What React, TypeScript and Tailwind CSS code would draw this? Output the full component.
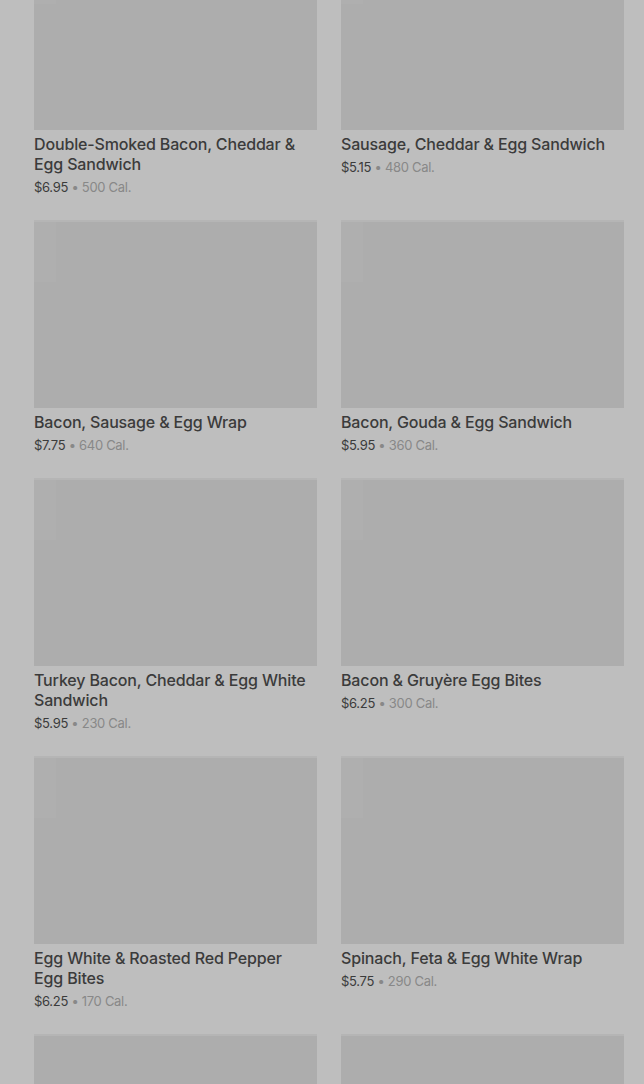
const items = [
  { name: "Double-Smoked Bacon, Cheddar & Egg Sandwich", price: "$6.95", cal: "500" },
  { name: "Sausage, Cheddar & Egg Sandwich", price: "$5.15", cal: "480" },
  { name: "Bacon, Sausage & Egg Wrap", price: "$7.75", cal: "640" },
  { name: "Bacon, Gouda & Egg Sandwich", price: "$5.95", cal: "360" },
  { name: "Turkey Bacon, Cheddar & Egg White Sandwich", price: "$5.95", cal: "230" },
  { name: "Bacon & Gruyère Egg Bites", price: "$6.25", cal: "300" },
  { name: "Egg White & Roasted Red Pepper Egg Bites", price: "$6.25", cal: "170" },
  { name: "Spinach, Feta & Egg White Wrap", price: "$5.75", cal: "290" },
];

function MenuCard({ item }: { item: (typeof items)[number] }) {
  return (
    <div className="flex flex-col">
      <div className="relative h-[188px] w-full bg-[#adadad] border-t-2 border-[#b5b5b5]">
        <div className="absolute left-0 top-0 h-[60px] w-[22px] bg-[#afafaf]" />
      </div>
      <h3 className="mt-[4px] pr-[8px] text-[16px] leading-[20px] font-medium tracking-[-0.15px] text-[#3b3b3b]">
        {item.name}
      </h3>
      <p className="mt-[4px] text-[13px] leading-[18px] tracking-[-0.3px] text-[#3b3b3b]">
        {item.price}
        <span className="text-[#888888]"> • {item.cal} Cal.</span>
      </p>
    </div>
  );
}

export default function App() {
  return (
    <div
      className="h-screen bg-[#bebebe] overflow-hidden"
      style={{ fontFamily: "Inter, 'Liberation Sans', sans-serif" }}
    >
      <div className="-mt-[58px] pl-[34px] pr-[20px] grid grid-cols-2 gap-x-[24px] gap-y-[24px]">
        {items.map((item) => (
          <MenuCard key={item.name} item={item} />
        ))}
        <div className="h-[188px] bg-[#adadad] border-t-2 border-[#b5b5b5]" />
        <div className="h-[188px] bg-[#adadad] border-t-2 border-[#b5b5b5]" />
      </div>
    </div>
  );
}
